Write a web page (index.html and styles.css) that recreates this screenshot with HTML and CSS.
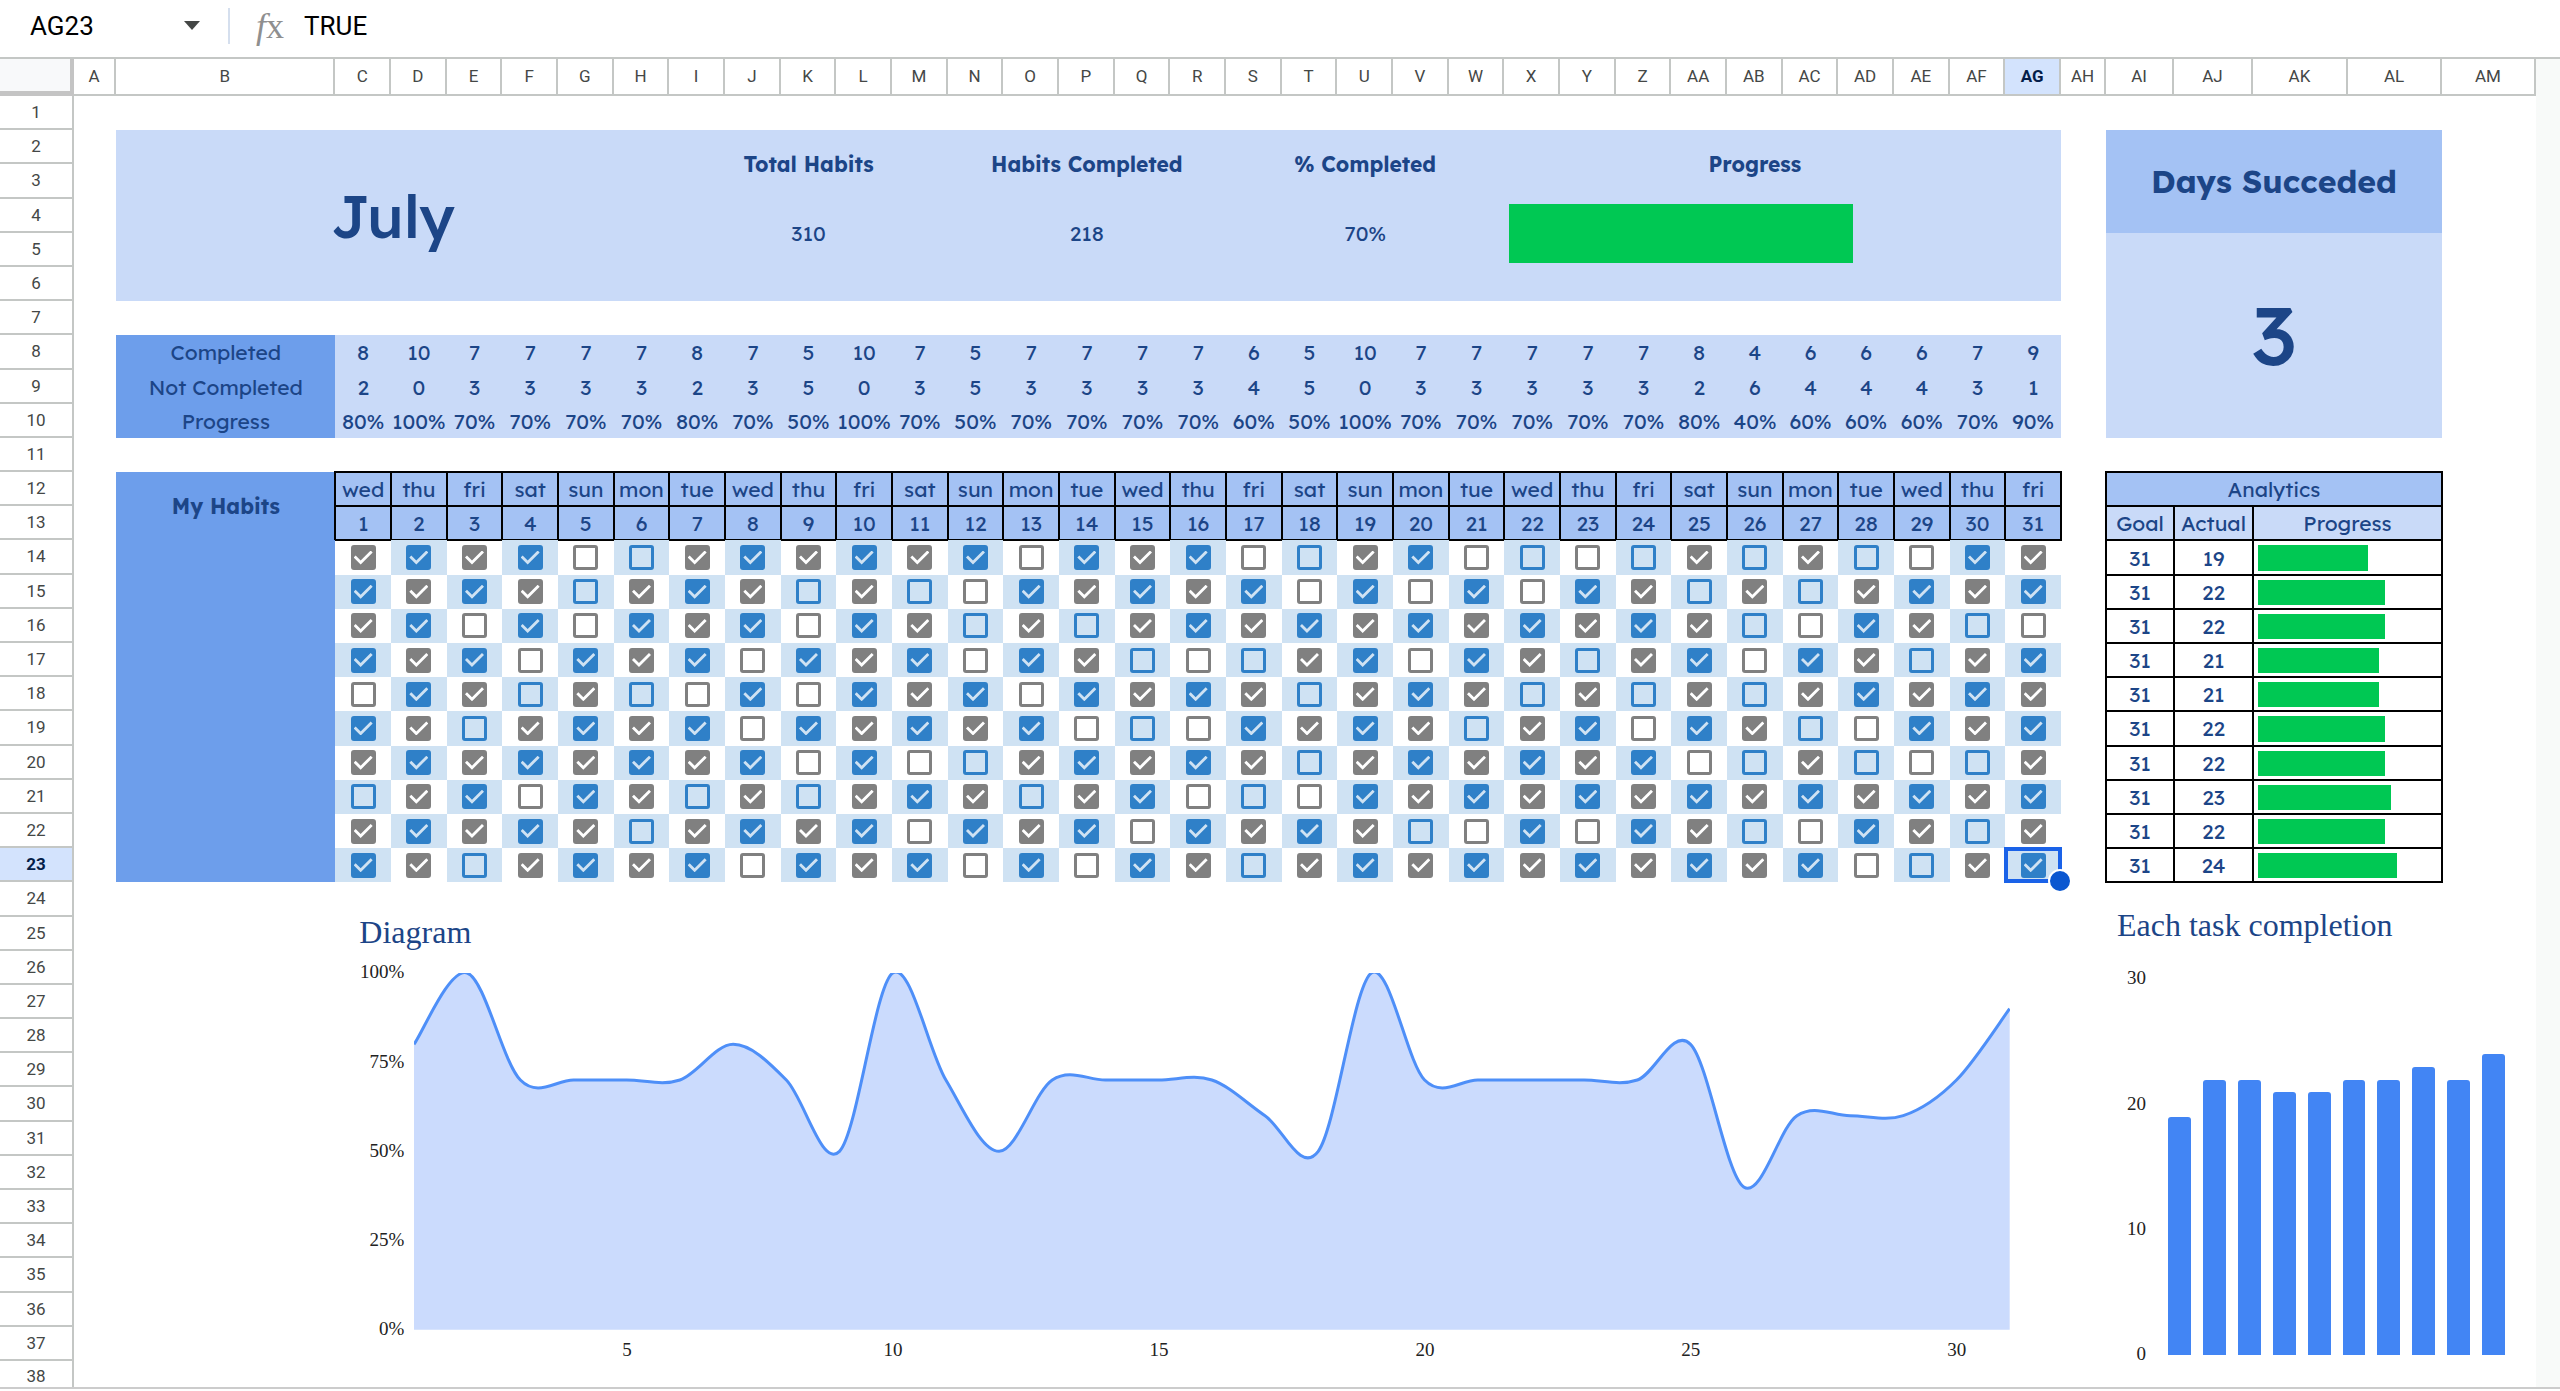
FILE: index.html
```html
<!DOCTYPE html>
<html lang="en">
<head>
  <meta charset="UTF-8">
  <title>Habit Tracker - July</title>
  <link rel="stylesheet" href="styles.css">
</head>
<body>
  <div class="formula-bar">
    <input class="name-box" type="text" value="AG23" aria-label="Name box">
    <button class="name-menu" aria-label="Named ranges">
      <svg width="16" height="9" viewBox="0 0 16 9"><path d="M0 0h16L8 9z" fill="#444746"/></svg>
    </button>
    <label class="fx" for="formula"><i>f</i>x</label>
    <input class="formula" type="text" id="formula" value="TRUE">
  </div>

  <main class="sheet">
    <div class="corner"></div>
    <div class="col-heads" id="colHeads"></div>
    <div class="row-heads" id="rowHeads"></div>

    <div class="cells">
      <section class="overview">
        <h1 class="month">July</h1>
        <h2>Total Habits</h2>
        <h2>Habits Completed</h2>
        <h2>% Completed</h2>
        <h2>Progress</h2>
        <p>310</p>
        <p>218</p>
        <p>70%</p>
        <div class="bar-cell"><div class="bar" style="width: 70%"></div></div>
      </section>

      <section class="days-done">
        <h2>Days Succeded</h2>
        <p>3</p>
      </section>

      <table class="day-grid summary">
        <tbody id="summary"></tbody>
      </table>

      <table class="day-grid habits">
        <thead id="habitHead"></thead>
        <tbody id="habitBody"></tbody>
      </table>

      <table class="analytics">
        <thead>
          <tr><th class="title" colspan="3">Analytics</th></tr>
          <tr><th>Goal</th><th>Actual</th><th>Progress</th></tr>
        </thead>
        <tbody id="analytics"></tbody>
      </table>

      <figure class="chart diagram">
        <figcaption>Diagram</figcaption>
        <div class="y-axis"><span>100%</span><span>75%</span><span>50%</span><span>25%</span><span>0%</span></div>
        <svg class="plot" viewBox="0 0 300 100" preserveAspectRatio="none">
          <path class="area" id="area"/>
          <path class="line" id="line"/>
        </svg>
        <div class="x-axis"><span>5</span><span>10</span><span>15</span><span>20</span><span>25</span><span class="last">30</span></div>
      </figure>

      <figure class="chart tasks">
        <figcaption>Each task completion</figcaption>
        <div class="y-axis"><span>30</span><span>20</span><span>10</span><span>0</span></div>
        <div class="plot columns" id="columns"></div>
      </figure>
    </div>
    <div class="gutter"></div>
  </main>

  <script src="script.js"></script>
</body>
</html>
```

FILE: styles.css
```css
:root {
  --navy: #1c4587;
  --blue: #6d9eeb;
  --mid: #a4c2f4;
  --light: #c9daf8;
  --green: #00c853;
  --line: #c4c7c5;
  --rows: repeat(37, minmax(34px, 1fr)) 26px;
  --cols: 127fr 657fr repeat(31, minmax(0, 167fr)) 135fr 204fr 237fr 285fr 282fr 282fr;
}

* { box-sizing: border-box; }

body {
  margin: 0;
  padding-bottom: 2px;
  min-height: 100vh;
  display: flex;
  flex-direction: column;
  font-family: Lexend, Inter, sans-serif;
  font-size: 21px;
  color: var(--navy);
  background: #fff;
}

h1, h2, p, figure { margin: 0; }
input, button { font: inherit; border: 0; background: none; padding: 0; }

/* formula bar */
.formula-bar {
  display: flex;
  align-items: center;
  height: 57px;
  padding: 0 30px 6px;
  font-family: Roboto, sans-serif;
  font-size: 26px;
  color: #1f1f1f;
}
.name-box { width: 148px; }
.name-menu { display: flex; width: 28px; justify-content: center; }
.fx {
  border-left: 2px solid #d5dfee;
  margin-left: 22px;
  padding-left: 26px;
  width: 76px;
  line-height: 36px;
  font-family: "Liberation Serif", serif;
  font-size: 36px;
  color: #8f8f8f;
}
.formula { flex: 1; }

/* sheet frame */
.sheet {
  flex: 1;
  display: grid;
  grid-template-columns: 74px 1fr 24px;
  grid-template-rows: 37px 1fr;
  border-top: 2px solid var(--line);
  border-bottom: 2px solid #ccc;
}
.corner { background: #f8f9fa; border: solid #c4c4c4; border-width: 0 4px 5px 0; }
.col-heads, .row-heads { display: grid; font-family: Roboto, sans-serif; font-size: 17px; color: #444746; text-align: center; }
.col-heads { grid-template-columns: var(--cols); line-height: 35px; }
.col-heads div { border: solid var(--line); border-width: 0 2px 2px 0; }
.row-heads { grid-template-rows: var(--rows); grid-row: 2; line-height: 32px; }
.row-heads div { border: solid var(--line); border-width: 0 2px 2px 0; }
.row-heads div:last-child { border-bottom: 0; padding-top: 4px; line-height: 22px; }
.col-heads .on, .row-heads .on { background: #d3e3fd; color: #041e49; font-weight: bold; }
.gutter { grid-column: 3; grid-row: 1 / 3; background: #f8faf9; }

.cells { display: grid; grid-template-columns: var(--cols); grid-template-rows: var(--rows); }

/* overview band, B2:AG6 */
.overview {
  grid-area: 2 / 2 / 7 / 34;
  display: grid;
  grid-template-columns: 1659fr repeat(3, 835fr) 1503fr 167fr;
  grid-template-rows: 2fr 2fr 1fr;
  align-items: center;
  text-align: center;
  background: var(--light);
}
.overview h2 { grid-row: 1; font-size: 21px; }
.overview p { grid-row: 2; }
.overview .month { grid-area: 1 / 1 / 4 / 2; font-size: 60px; font-weight: 500; }
.overview .bar-cell { grid-area: 2 / 5; }
.bar-cell { align-self: stretch; padding: 5px 5px 4px; }
.bar { height: 100%; background: var(--green); }

/* days succeeded, AI2:AL10 */
.days-done {
  grid-area: 2 / 35 / 11 / 39;
  display: grid;
  grid-template-rows: 1fr 2fr;
  place-items: center;
  background: linear-gradient(var(--mid) 33.3%, var(--light) 33.3%);
}
.days-done h2 { font-size: 32px; }
.days-done p { font-size: 82px; line-height: 100px; font-weight: 500; }

/* tables share one grid with the sheet columns */
table { display: grid; grid-auto-rows: 1fr; }
thead, tbody, tr { display: contents; }
th, td { display: flex; align-items: center; justify-content: center; padding: 0; font-weight: 400; }
.day-grid { grid-template-columns: 657fr repeat(31, minmax(0, 167fr)); }
.summary { grid-area: 8 / 2 / 11 / 34; background: var(--light); }
.summary th { background: var(--blue); }

.habits { grid-area: 12 / 2 / 24 / 34; }
.habits .name { grid-row: 1 / 3; background: var(--blue); font-weight: bold; }
.habits .blank { grid-column: 1; grid-row: 3 / 13; background: var(--blue); }
.habits .day { background: var(--mid); outline: 2px solid #000; outline-offset: -1px; }
.habits .tint { background: #cfe2f3; }
.habits .selected { position: relative; outline: 4px solid #1a62e8; outline-offset: -3px; }
.selected::after {
  content: "";
  position: absolute;
  right: -11px;
  bottom: -11px;
  width: 20px;
  height: 20px;
  border: 2px solid #fff;
  border-radius: 50%;
  background: #0b57d0;
}

.habits input {
  appearance: none;
  margin: 0;
  width: 25px;
  height: 25px;
  display: grid;
  place-items: center;
  border: 3px solid #808080;
  border-radius: 3px;
  color: #fff;
}
.habits .tint input { border-color: #2f80c8; color: #cfe2f3; }
.habits input:checked { background: #808080; }
.habits .tint input:checked { background: #2f80c8; }
.habits input:checked::before {
  content: "";
  width: 19px;
  height: 14px;
  background: currentColor;
  clip-path: polygon(0 7px, 2px 5px, 7px 10px, 17px 0, 19px 2px, 7px 14px);
}

.analytics { grid-area: 12 / 35 / 24 / 39; grid-template-columns: 204fr 237fr 567fr; }
.analytics th { background: var(--light); }
.analytics .title { grid-column: 1 / 4; background: var(--mid); }
.analytics th, .analytics td { outline: 2px solid #000; outline-offset: -1px; }
.analytics .bar-cell { display: block; padding: 5px 5px 4px; }

/* charts fill their cell range and never stretch the rows */
.chart {
  contain: size;
  display: grid;
  column-gap: 10px;
  font-family: "Liberation Serif", serif;
  font-size: 19px;
  line-height: 22px;
  color: #222;
}
.chart figcaption { grid-column: 1 / 4; font-size: 32px; line-height: 36px; color: var(--navy); }
.y-axis { display: flex; flex-direction: column; justify-content: space-between; text-align: right; margin: -12px 0 -10px; }
.plot { width: 100%; height: 100%; min-height: 0; }

.diagram { grid-area: 24 / 3 / 39 / 34; grid-template-columns: 69px 1fr 41px; grid-template-rows: 91px minmax(0, 1fr) 57px; }
.diagram figcaption { padding: 32px 0 0 24px; }
.area { fill: #cbdbfd; }
.line { fill: none; stroke: #4e8ff8; stroke-width: 3px; vector-effect: non-scaling-stroke; }
.x-axis { grid-column: 2; display: grid; grid-template-columns: 3fr repeat(5, 10fr) 3fr 4fr; padding-top: 9px; text-align: center; }
.x-axis span:first-child { grid-column: 2; }
.x-axis .last { grid-column: 8; }

.tasks { grid-area: 24 / 35 / 39 / 40; grid-template-columns: 40px 1fr 9px; grid-template-rows: 97px minmax(0, 1fr) 32px; column-gap: 22px; }
.tasks figcaption { padding: 25px 0 0 11px; }
.columns { display: flex; align-items: flex-end; gap: 12px; }
.columns div { flex: 1; background: #4285f4; border-radius: 3px 3px 0 0; }
```

FILE: script.js
```js
const DAYS = 31;
const WEEK = ["wed", "thu", "fri", "sat", "sun", "mon", "tue"];

// days missed, one list per habit
const missed = [
  [5, 6, 13, 17, 18, 21, 22, 23, 24, 26, 28, 29],
  [5, 9, 11, 12, 18, 20, 22, 25, 27],
  [3, 5, 9, 12, 14, 26, 27, 30, 31],
  [4, 8, 12, 15, 16, 17, 20, 23, 26, 29],
  [1, 4, 6, 7, 9, 13, 18, 22, 24, 26],
  [3, 8, 14, 15, 16, 21, 24, 27, 28],
  [9, 11, 12, 18, 25, 26, 28, 29, 30],
  [1, 4, 7, 9, 13, 16, 17, 18],
  [6, 11, 15, 20, 21, 23, 26, 27, 30],
  [3, 8, 12, 14, 17, 28, 29]
];

const days = Array.from({ length: DAYS }, (_, i) => i + 1);
const done = days.map(d => missed.filter(list => !list.includes(d)).length);
const fill = (id, html) => { document.getElementById(id).innerHTML = html; };

function colName(i) {
  return (i > 25 ? "A" : "") + String.fromCharCode(65 + i % 26);
}

// headers
fill("colHeads", Array.from({ length: 39 }, (_, i) => {
  const name = colName(i);
  return `<div class="${name === "AG" ? "on" : ""}">${name}</div>`;
}).join(""));
fill("rowHeads", Array.from({ length: 38 }, (_, i) =>
  `<div class="${i === 22 ? "on" : ""}">${i + 1}</div>`).join(""));

// daily summary
const row = (name, values) => `<tr><th>${name}</th>${values.map(v => `<td>${v}</td>`).join("")}</tr>`;
fill("summary",
  row("Completed", done) +
  row("Not Completed", done.map(n => 10 - n)) +
  row("Progress", done.map(n => n * 10 + "%")));

// habits
fill("habitHead",
  `<tr><th class="name" rowspan="2">My Habits</th>${days.map(d => `<th class="day">${WEEK[(d - 1) % 7]}</th>`).join("")}</tr>` +
  `<tr>${days.map(d => `<th class="day">${d}</th>`).join("")}</tr>`);
fill("habitBody", missed.map((list, r) => {
  const blank = r === 0 ? `<td class="blank" rowspan="10"></td>` : "";
  const cells = days.map(d => {
    const cls = [(r + d) % 2 === 0 ? "tint" : "", r === 9 && d === 31 ? "selected" : ""].join(" ").trim();
    return `<td class="${cls}"><input type="checkbox" aria-label="Habit ${r + 1}, day ${d}"${list.includes(d) ? "" : " checked"}></td>`;
  }).join("");
  return `<tr>${blank}${cells}</tr>`;
}).join(""));

// analytics
const totals = missed.map(list => DAYS - list.length);
fill("analytics", totals.map(n =>
  `<tr><td>${DAYS}</td><td>${n}</td><td class="bar-cell"><div class="bar" style="width: ${n / DAYS * 100}%"></div></td></tr>`).join(""));
fill("columns", totals.map(n => `<div style="height: ${n / 30 * 100}%"></div>`).join(""));

// smoothed area chart
const pts = done.map((n, i) => [i * 10, 100 - n * 10]);
let d = `M${pts[0]}`;
for (let i = 0; i < pts.length - 1; i++) {
  const a = pts[i - 1] || pts[i], b = pts[i], c = pts[i + 1], e = pts[i + 2] || c;
  d += `C${b[0] + (c[0] - a[0]) / 6},${b[1] + (c[1] - a[1]) / 6} ${c[0] - (e[0] - b[0]) / 6},${c[1] - (e[1] - b[1]) / 6} ${c}`;
}
document.getElementById("line").setAttribute("d", d);
document.getElementById("area").setAttribute("d", d + "V100H0Z");
```
